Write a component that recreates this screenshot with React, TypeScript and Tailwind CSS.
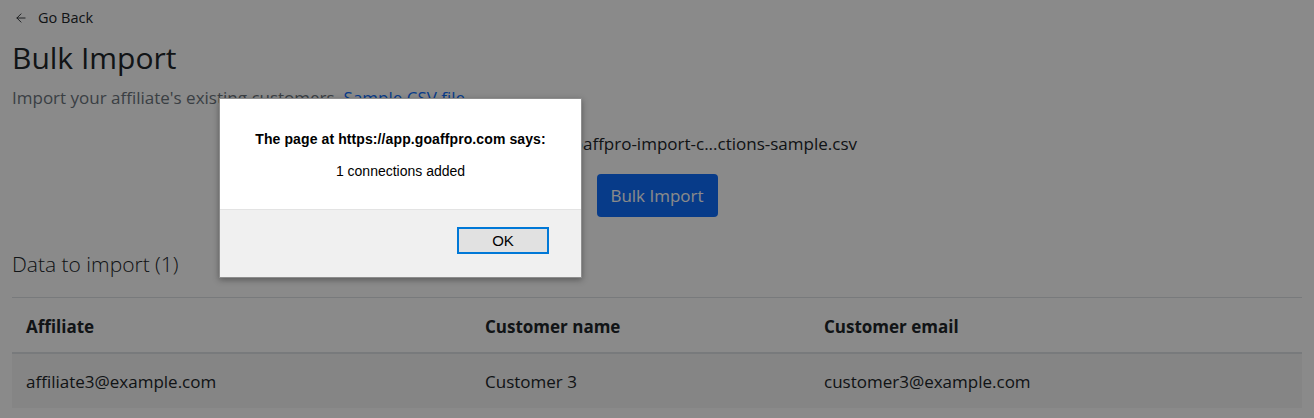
import { ArrowLeft, FileText } from 'lucide-react';

const rows = [
  { affiliate: 'affiliate3@example.com', name: 'Customer 3', email: 'customer3@example.com' },
];

export default function App() {
  return (
    <div className="relative h-[418px] w-full overflow-hidden bg-white font-['Open_Sans',sans-serif] text-[#212529]">
      <div className="px-3">
        <div className="mt-2 flex h-5 items-center gap-[10px] pl-[2px] text-[14.5px]">
          <ArrowLeft className="h-[14px] w-[14px]" strokeWidth={1.5} />
          <span>Go Back</span>
        </div>
        <h1 className="mt-[11px] text-[30px] leading-[38px] font-normal">Bulk Import</h1>
        <p className="mt-[9px] text-[17px] leading-6 text-[#6c757d]">
          Import your affiliate's existing customers. <a className="text-[#0d6efd]">Sample CSV file</a>
        </p>
        <div className="mt-[22px] flex flex-col items-center">
          <div className="flex w-[400px] items-center justify-end gap-2 text-[17px] leading-6">
            <FileText className="h-5 w-5 text-[#6c757d]" strokeWidth={1.5} />
            <span>goaffpro-import-c...ctions-sample.csv</span>
          </div>
          <button className="mt-[18px] h-[43px] w-[121px] rounded-[4px] bg-[#0d6efd] text-[17px] text-white">
            Bulk Import
          </button>
        </div>
        <h5 className="mt-[35px] text-[21px] leading-6 font-light">Data to import ({rows.length})</h5>
        <div className="mt-[21px] border-t border-[#dee2e6]">
          <div className="grid h-[54px] grid-cols-[459px_339px_1fr] items-center pt-[3px] text-[17px] font-bold">
            <div className="px-[14px]">Affiliate</div>
            <div className="px-[14px]">Customer name</div>
            <div className="px-[14px]">Customer email</div>
          </div>
          {rows.map((r) => (
            <div
              key={r.email}
              className="grid h-[56px] grid-cols-[459px_339px_1fr] items-center border-t-2 border-[#dee2e6] bg-[#f6f6f6] pt-[2px] text-[17px]"
            >
              <div className="px-[14px]">{r.affiliate}</div>
              <div className="px-[14px]">{r.name}</div>
              <div className="px-[14px]">{r.email}</div>
            </div>
          ))}
        </div>
      </div>

      {/* alert backdrop */}
      <div className="absolute inset-0 bg-black/[0.46]" />

      <div className="absolute left-[219px] top-[98px] w-[363px] border border-[#8e8e8e] bg-white font-['Liberation_Sans',Arial,sans-serif] text-black shadow-[0_2px_6px_rgba(0,0,0,0.35)]">
        <div className="flex h-[110px] flex-col items-center pt-[30px]">
          <div className="text-[14px] font-bold leading-5 tracking-[0.1px]">The page at https://app.goaffpro.com says:</div>
          <div className="mt-[12px] text-[14px] leading-5">1 connections added</div>
        </div>
        <div className="flex h-[68px] justify-end border-t border-[#e3e3e3] bg-[#f0f0f0] pr-[32px] pt-[17px]">
          <button className="h-[27px] w-[92px] border-2 border-[#0078d7] bg-[#e1e1e1] text-[15px] leading-none">
            OK
          </button>
        </div>
      </div>
    </div>
  );
}
